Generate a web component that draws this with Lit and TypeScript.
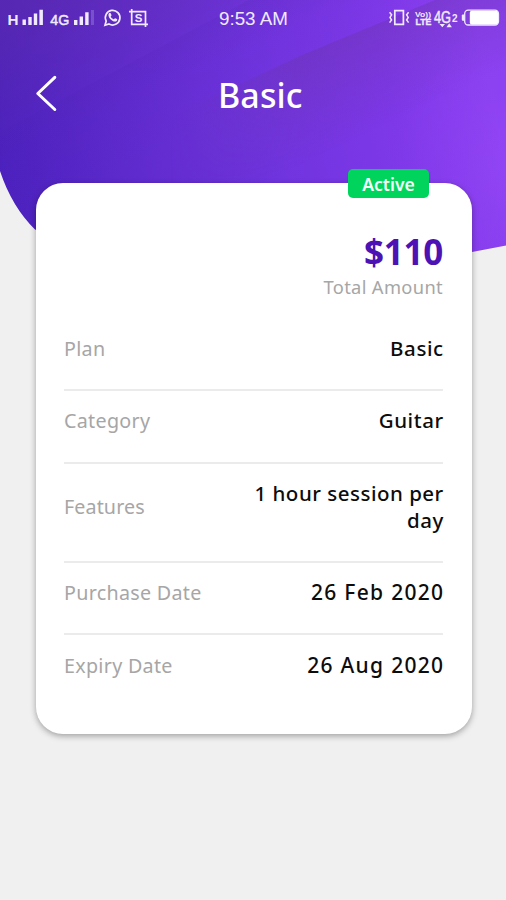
import { LitElement, html, css, svg } from "lit";
import { customElement, property } from "lit/decorators.js";

interface Detail {
  label: string;
  value: string;
  kind?: string;
}

const details: Detail[] = [
  { label: "Plan", value: "Basic" },
  { label: "Category", value: "Guitar" },
  { label: "Features", value: "1 hour session per day", kind: "tall" },
  { label: "Purchase Date", value: "26 Feb 2020", kind: "date" },
  { label: "Expiry Date", value: "26 Aug 2020", kind: "date" },
];

@customElement("status-bar")
class StatusBar extends LitElement {
  static styles = css`
    :host {
      display: grid;
      grid-template-columns: 219px 1fr 118px;
      height: 36px;
      color: #f1eaff;
    }
    svg { display: block; }
    .time {
      font: 18.8px/37px "Liberation Sans", Arial, sans-serif;
      white-space: nowrap;
    }
    .glyph { font-family: "Liberation Sans", Arial, sans-serif; fill: currentColor; }
    .bold { font-weight: 700; }
  `;
  render() {
    return html`
      <svg width="160" height="36" viewBox="0 0 160 36" fill="none">
        <text class="glyph bold" x="7.5" y="25" font-size="15.5" textLength="11" lengthAdjust="spacingAndGlyphs">H</text>
        <path fill="currentColor" d="M22.5 19.5h3.4v5.5h-3.4zM28.3 17h3.4v8h-3.4zM33.8 13.5h3.4V25h-3.4zM39.4 9.7h3.5V25h-3.5z" />
        <text class="glyph" x="50.3" y="25" font-size="15.5" stroke="currentColor" stroke-width=".5" textLength="19" lengthAdjust="spacingAndGlyphs">4G</text>
        <path fill="currentColor" d="M74 20h3.4v5H74zM79.6 16.5H83V25h-3.4zM85.2 12.2h3.4V25h-3.4z" />
        <path fill="currentColor" opacity=".2" d="M91 10h3v15h-3z" />
        <path stroke="currentColor" stroke-width="1.7" d="M105 25.2l1.2-4.1a7.3 7.3 0 1 1 2.8 2.9z" />
        <path fill="currentColor" d="M108.8 13.4c.7-.8 1.7-.7 2 .1l.7 1.6c.2.6-.8 1.3-.8 1.7.4 1 1.9 2.2 2.9 2.5.5.1 1-1.3 1.6-1.1l1.7.8c.8.5.1 1.9-.9 2.4-3.6.9-9-4.6-7.2-8z" />
        <path stroke="currentColor" stroke-width="1.7" d="M129 11.7h16.5V27M131.7 9v15.3H148" />
        <text class="glyph bold" x="134.7" y="22" font-size="11.5">S</text>
      </svg>
      <span class="time">9:53 AM</span>
      <svg width="118" height="36" viewBox="388 0 118 36" fill="none">
        <path stroke="currentColor" stroke-width="1.7" d="M394.8 10.7h8.6v13.6h-8.6z" />
        <path stroke="currentColor" stroke-width="1.5" d="M389.6 12.2l2 2.6-1.6 2.6 1.6 2.6-2 2.6M408.6 12.2l-2 2.6 1.6 2.6-1.6 2.6 2 2.6" />
        <text class="glyph bold" x="415" y="16.5" font-size="7.4" textLength="16" lengthAdjust="spacingAndGlyphs">Vo))</text>
        <text class="glyph bold" x="415.5" y="25" font-size="8.2" stroke="currentColor" stroke-width=".3" textLength="16" lengthAdjust="spacingAndGlyphs">LTE</text>
        <text class="glyph" x="434" y="22.5" font-size="17" stroke="currentColor" stroke-width=".5" textLength="17" lengthAdjust="spacingAndGlyphs">4G</text>
        <text class="glyph bold" x="452" y="21.5" font-size="10">2</text>
        <path fill="currentColor" d="M439.5 24h5.5l-2.7 3.2zM446.5 27.2l2.7-4 2.7 4z" />
        <rect x="464.7" y="10.2" width="33.8" height="14.8" rx="3.5" stroke="currentColor" stroke-width="1.3" />
        <path fill="currentColor" d="M464 14.5h-1.2q-1 0-1 1v4.2q0 1 1 1h1.2z" />
        <rect x="469.8" y="10.8" width="28.2" height="13.6" rx="2" fill="#fff" />
      </svg>
    `;
  }
}

@customElement("detail-row")
class DetailRow extends LitElement {
  @property({ attribute: false }) item!: Detail;
  static styles = css`
    .row {
      display: flex;
      align-items: center;
      justify-content: space-between;
      height: 70.3px;
      padding-bottom: 11.5px;
      box-sizing: border-box;
    }
    .tall { height: 97px; padding-bottom: 10.5px; }
    .label {
      color: #a6a6a6;
      font-size: 19.7px;
      font-weight: 400;
      letter-spacing: 0.3px;
    }
    .value {
      width: 200px;
      margin-right: -0.8px;
      color: #0c0c0c;
      font-size: 20.5px;
      font-weight: 500;
      line-height: 27px;
      letter-spacing: 0.6px;
      text-align: right;
    }
    .tall .label { letter-spacing: 0.1px; }
    .tall .value { letter-spacing: 0.5px; }
    .date { padding-bottom: 10px; }
    .date .value { font-size: 21px; letter-spacing: 1.3px; margin-right: -1.4px; }
  `;
  render() {
    return html`<div class="row ${this.item.kind ?? ""}">
      <span class="label">${this.item.label}</span>
      <span class="value">${this.item.value}</span>
    </div>`;
  }
}

const backdrop = svg`
  <defs>
    <linearGradient id="base" gradientUnits="userSpaceOnUse" x1="0" y1="190" x2="490" y2="90">
      <stop offset="0" stop-color="#4b21bd" />
      <stop offset=".28" stop-color="#602bce" />
      <stop offset=".55" stop-color="#7034de" />
      <stop offset=".8" stop-color="#7e38e8" />
      <stop offset="1" stop-color="#8b41f0" />
    </linearGradient>
    <linearGradient id="shade" gradientUnits="userSpaceOnUse" x1="310" y1="52" x2="352" y2="140">
      <stop offset="0" stop-color="#6c35ae" stop-opacity=".45" />
      <stop offset="1" stop-color="#6c35ae" stop-opacity="0" />
    </linearGradient>
    <linearGradient id="shadeFade" gradientUnits="userSpaceOnUse" x1="170" y1="0" x2="300" y2="0">
      <stop offset="0" stop-color="#000" />
      <stop offset="1" stop-color="#fff" />
    </linearGradient>
    <mask id="shadeMask" maskUnits="userSpaceOnUse" x="0" y="0" width="506" height="300">
      <rect width="506" height="300" fill="url(#shadeFade)" />
    </mask>
    <linearGradient id="corner" gradientUnits="userSpaceOnUse" x1="40" y1="0" x2="90" y2="115">
      <stop offset="0" stop-color="#5a2ba4" stop-opacity=".5" />
      <stop offset="1" stop-color="#5a2ba4" stop-opacity="0" />
    </linearGradient>
    <linearGradient id="fold" gradientUnits="userSpaceOnUse" x1="100" y1="75" x2="145" y2="160">
      <stop offset="0" stop-color="#4b1eb0" stop-opacity=".13" />
      <stop offset="1" stop-color="#4b1eb0" stop-opacity="0" />
    </linearGradient>
    <radialGradient id="glow" gradientUnits="userSpaceOnUse" cx="506" cy="165" r="120">
      <stop offset="0" stop-color="#a04cff" stop-opacity=".28" />
      <stop offset="1" stop-color="#a04cff" stop-opacity="0" />
    </radialGradient>
    <clipPath id="blob">
      <path d="M0 0H506V245.500L472 252Q200 310 35 229.500Q12 207 0 171z" />
    </clipPath>
  </defs>
  <g clip-path="url(#blob)">
    <rect width="506" height="300" fill="url(#base)" />
    <path d="M0 0H506V300H0z" fill="url(#corner)" />
    <path d="M0 132L249 0H506V300H0z" fill="url(#fold)" />
    <path d="M150 127L300 56L435 0H506V300H150z" fill="url(#shade)" mask="url(#shadeMask)" />
    <rect x="380" y="40" width="126" height="220" fill="url(#glow)" />
  </g>
`;

@customElement("app-root")
class AppRoot extends LitElement {
  static styles = css`
    :host {
      display: block;
      position: relative;
      height: 900px;
      overflow: hidden;
      background: #f0f0f0;
      font-family: "Noto Sans", "Open Sans", sans-serif;
    }
    .backdrop { position: absolute; top: 0; left: 0; }
    .screen { position: relative; }
    .header {
      display: grid;
      grid-template-columns: 219px 1fr;
      align-items: center;
      height: 118px;
      padding-bottom: 29px;
      color: #fff;
    }
    .back { display: block; margin: -2px 0 0 34px; }
    .title {
      margin: 0 0 0 -1px;
      font-size: 34px;
      font-weight: 500;
      line-height: 46px;
      letter-spacing: 0.1px;
    }
    .card {
      position: relative;
      width: 436px;
      height: 551px;
      margin-left: 35.5px;
      padding: 44px 28.5px 0;
      box-sizing: border-box;
      border-radius: 27px;
      background: #fff;
      box-shadow: 0 2px 6px rgba(0, 0, 0, 0.34);
    }
    .badge {
      position: absolute;
      top: -14px;
      right: 42.5px;
      width: 81px;
      height: 29px;
      border-radius: 5px;
      background: #00d45d;
      color: #f4fff8;
      font-size: 17.5px;
      font-weight: 600;
      line-height: 31px;
      text-align: center;
    }
    .total { text-align: right; }
    .amount {
      color: #4c12b4;
      font-size: 35px;
      font-weight: 700;
      line-height: 50px;
      letter-spacing: -0.3px;
    }
    .caption {
      margin-top: -1px;
      color: #a6a6a6;
      font-size: 18.3px;
      font-weight: 400;
      line-height: 22px;
      letter-spacing: 0.35px;
    }
    .list { padding-top: 21px; }
    .item { display: block; }
    .item + .item { border-top: 2px solid #ebebeb; }
  `;
  render() {
    return html`
      <svg class="backdrop" width="506" height="300" viewBox="0 0 506 300">${backdrop}</svg>
      <div class="screen">
        <status-bar></status-bar>
        <header class="header">
          <svg class="back" width="26" height="42" viewBox="34 73 26 42" fill="none">
            <path d="M54.8 77.3L37.8 93.5L54.8 109.5" stroke="#fff" stroke-width="3" stroke-linecap="round" stroke-linejoin="round" />
          </svg>
          <h1 class="title">Basic</h1>
        </header>
        <main class="card">
          <span class="badge">Active</span>
          <div class="total">
            <div class="amount">$110</div>
            <div class="caption">Total Amount</div>
          </div>
          <div class="list">
            ${details.map((d) => html`<detail-row class="item" .item=${d}></detail-row>`)}
          </div>
        </main>
      </div>
    `;
  }
}
